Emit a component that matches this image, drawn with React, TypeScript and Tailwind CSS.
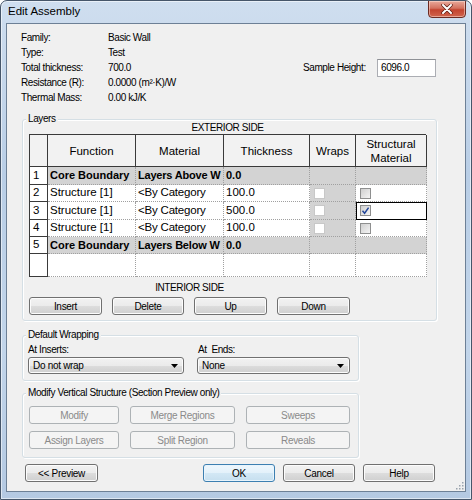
import React from "react";

const btn =
  "h-[18px] rounded-[3px] border border-[#707070] bg-[linear-gradient(#f2f2f2,#ebebeb_50%,#dddddd_50%,#cfcfcf)] shadow-[inset_0_0_0_1px_#fcfcfc] text-[10px] tracking-[-0.3px] text-black flex items-center justify-center";
const btnOff =
  "h-[18px] rounded-[3px] border border-[#adb2b5] bg-[#f4f4f4] text-[10px] tracking-[-0.3px] text-[#8a8a8a] flex items-center justify-center";
const btnDefault =
  "h-[18px] rounded-[3px] border border-[#3c7fb1] bg-[linear-gradient(#eef7fd,#e3f1fa_50%,#d3e8f5_50%,#c6dfef)] shadow-[inset_0_0_0_1px_#e8f4fc] text-[10px] tracking-[-0.3px] text-black flex items-center justify-center";

const cols = "grid grid-cols-[18px_88px_88px_86px_46px_71px]";
const head = "border-r border-b border-[#3a3a3a] bg-[#f2f2f2] flex items-center justify-center text-center leading-[14px]";
const num = "border-r border-b border-[#3a3a3a] bg-white flex items-center pl-[3px]";
const cell = "border-r border-b border-dotted border-[#a0a0a0] flex items-center overflow-hidden whitespace-nowrap";

type Row = {
  n: string;
  f?: string;
  m?: string;
  t?: string;
  bold?: boolean;
  h: string;
  checked?: boolean;
  sel?: boolean;
  boxes?: boolean;
};

const rows: Row[] = [
  { n: "1", f: "Core Boundary", m: "Layers Above W", t: "0.0", bold: true, h: "h-[18px]" },
  { n: "2", f: "Structure [1]", m: "<By Category", t: "100.0", h: "h-[17px]", boxes: true },
  { n: "3", f: "Structure [1]", m: "<By Category", t: "500.0", h: "h-[18px]", boxes: true, checked: true, sel: true },
  { n: "4", f: "Structure [1]", m: "<By Category", t: "100.0", h: "h-[17px]", boxes: true },
  { n: "5", f: "Core Boundary", m: "Layers Below W", t: "0.0", bold: true, h: "h-[17px]" },
  { n: "", h: "h-[23px]" },
];

function Group({ label, className, children }: { label: string; className: string; children?: React.ReactNode }) {
  return (
    <div className={`relative rounded-[3px] border border-[#d5dfe5] shadow-[inset_1px_1px_0_#ffffff,1px_1px_0_#ffffff] ${className}`}>
      <span className="absolute top-[-7px] left-[3px] bg-[#f0f0f0] px-[2px] leading-[12px] whitespace-nowrap">{label}</span>
      {children}
    </div>
  );
}

function Combo({ value, className }: { value: string; className: string }) {
  return (
    <div className={`${btn} !justify-between pl-[4px] pr-[5px] ${className}`}>
      <span>{value}</span>
      <svg width="7" height="4" viewBox="0 0 7 4">
        <polygon points="0,0 7,0 3.5,4" fill="#000" />
      </svg>
    </div>
  );
}

function Check({ kind, checked }: { kind: "off" | "on"; checked?: boolean }) {
  if (kind === "off") {
    return <div className="ml-[4px] w-[11px] h-[11px] border border-[#c8c8c8] bg-white" />;
  }
  return (
    <div className="ml-[4px] w-[11px] h-[11px] border border-[#8e8f8f] bg-[linear-gradient(135deg,#cfcfcf,#f4f4f4)] flex items-center justify-center">
      {checked && (
        <svg width="9" height="9" viewBox="0 0 9 9">
          <path d="M1.5 4.8 L3.6 7.2 L7.6 1.6" stroke="#24479a" strokeWidth="1.5" fill="none" />
        </svg>
      )}
    </div>
  );
}

export default function App() {
  return (
    <div className="w-[472px] h-[500px] font-['Liberation_Sans',Arial,sans-serif] text-black">
      <div className="relative w-[472px] h-[500px] rounded-t-[7px] border border-[#46566a] bg-[linear-gradient(180deg,#cfdeef,#b9cee6_35%,#c2d5ea_70%,#b4c9e2)] shadow-[inset_0_0_0_1px_rgba(255,255,255,0.55)] overflow-hidden">
        {/* TITLE */}
        <div className="h-[22px] flex items-center pl-[7px] text-[11.5px] text-black">Edit Assembly</div>
        <div className="absolute top-[-1px] right-[5px] w-[38px] h-[18px] rounded-b-[4px] border border-[#6b2a22] bg-[linear-gradient(#e9a99b,#d3715f_45%,#c3432f_55%,#d0644d)] shadow-[inset_0_0_0_1px_rgba(255,230,220,0.5)] flex items-center justify-center">
          <svg width="12" height="10" viewBox="0 0 12 10">
            <path d="M2 1 L10 9 M10 1 L2 9" stroke="#5a1a12" strokeWidth="3.4" strokeLinecap="round" />
            <path d="M2 1 L10 9 M10 1 L2 9" stroke="#ffffff" strokeWidth="2" strokeLinecap="round" />
          </svg>
        </div>

        {/* CLIENT */}
        <div className="relative mx-[5px] h-[469px] border border-[#6d8096] bg-[#f0f0f0] text-[10px] tracking-[-0.4px]">
          {/* INFO */}
          <div className="pt-[6px] pl-[14px] flex flex-col">
            <div className="h-[15px] flex items-center">
              <span className="w-[87px]">Family:</span>
              <span>Basic Wall</span>
            </div>
            <div className="h-[15px] flex items-center">
              <span className="w-[87px]">Type:</span>
              <span>Test</span>
            </div>
            <div className="h-[15px] flex items-center">
              <span className="w-[87px]">Total thickness:</span>
              <span className="w-[195px]">700.0</span>
              <span className="w-[74px]">Sample Height:</span>
              <div className="w-[59px] h-[18px] border border-[#abadb3] border-t-[#8e9196] bg-white flex items-center pl-[3px] shrink-0">6096.0</div>
            </div>
            <div className="h-[15px] flex items-center">
              <span className="w-[87px]">Resistance (R):</span>
              <span>0.0000 (m²·K)/W</span>
            </div>
            <div className="h-[15px] flex items-center">
              <span className="w-[87px]">Thermal Mass:</span>
              <span>0.00 kJ/K</span>
            </div>
          </div>

          {/* LAYERS */}
          <Group label="Layers" className="mt-[14px] ml-[15px] w-[415px] h-[202px]">
            <div className="pt-[2px] ml-[6px] w-[397px]">
              <div className="h-[12px] leading-[12px] text-center">EXTERIOR SIDE</div>
              <div className={`${cols} border-l border-t border-[#3a3a3a] text-[11.5px] tracking-normal`}>
                <div className={`${head} h-[32px]`} />
                <div className={`${head} h-[32px]`}>Function</div>
                <div className={`${head} h-[32px]`}>Material</div>
                <div className={`${head} h-[32px]`}>Thickness</div>
                <div className={`${head} h-[32px]`}>Wraps</div>
                <div className={`${head} h-[32px]`}>
                  Structural
                  <br />
                  Material
                </div>
                {rows.map((r, i) => {
                  const gray = r.bold ? "bg-[#d3d3d3]" : "bg-white";
                  const txt = r.bold ? "font-bold text-[11px]" : "";
                  return (
                    <React.Fragment key={i}>
                      <div className={`${num} ${r.h}`}>{r.n}</div>
                      <div className={`${cell} ${r.h} ${gray} ${txt} pl-[2px]`}>{r.f}</div>
                      <div className={`${cell} ${r.h} ${gray} ${txt} pl-[2px] tracking-[-0.2px]`}>{r.m}</div>
                      <div className={`${cell} ${r.h} ${gray} ${txt} pl-[2px]`}>{r.t}</div>
                      <div className={`${cell} ${r.h} ${r.boxes || r.bold ? "bg-[#d3d3d3]" : "bg-white"}`}>
                        {r.boxes && <Check kind="off" />}
                      </div>
                      <div
                        className={`${cell} ${r.h} ${gray} ${r.sel ? "outline outline-[1.5px] outline-black -outline-offset-1" : ""}`}
                      >
                        {r.boxes && <Check kind="on" checked={r.checked} />}
                      </div>
                    </React.Fragment>
                  );
                })}
              </div>
              <div className="w-[321px]">
                <div className="mt-[5px] h-[12px] leading-[12px] text-center">INTERIOR SIDE</div>
                <div className="mt-[3px] flex gap-[10px]">
                  <div className={`${btn} w-[73px]`}>Insert</div>
                  <div className={`${btn} w-[72px]`}>Delete</div>
                  <div className={`${btn} w-[73px]`}>Up</div>
                  <div className={`${btn} w-[73px]`}>Down</div>
                </div>
              </div>
            </div>
          </Group>

          {/* DEFAULT WRAPPING */}
          <Group label="Default Wrapping" className="mt-[14px] ml-[15px] w-[337px] h-[46px]">
            <div className="pt-[8px] pl-[5px] flex gap-[13px]">
              <div className="w-[156px]">
                <div className="h-[12px] leading-[12px]">At Inserts:</div>
                <Combo value="Do not wrap" className="mt-[1px] !h-[17px] w-[156px]" />
              </div>
              <div className="w-[153px]">
                <div className="h-[12px] leading-[12px] pl-[1px]">At&nbsp; Ends:</div>
                <Combo value="None" className="mt-[1px] !h-[17px] w-[153px]" />
              </div>
            </div>
          </Group>

          {/* MODIFY VERTICAL STRUCTURE */}
          <Group label="Modify Vertical Structure (Section Preview only)" className="mt-[12px] ml-[15px] w-[337px] h-[65px]">
            <div className="pt-[12px] pl-[6px] flex flex-col gap-[7px]">
              <div className="flex gap-[11px]">
                <div className={`${btnOff} w-[90px]`}>Modify</div>
                <div className={`${btnOff} w-[105px]`}>Merge Regions</div>
                <div className={`${btnOff} w-[104px]`}>Sweeps</div>
              </div>
              <div className="flex gap-[11px]">
                <div className={`${btnOff} w-[90px]`}>Assign Layers</div>
                <div className={`${btnOff} w-[105px]`}>Split Region</div>
                <div className={`${btnOff} w-[104px]`}>Reveals</div>
              </div>
            </div>
          </Group>

          {/* BOTTOM BUTTONS */}
          <div className="mt-[6px] flex">
            <div className={`${btn} ml-[18px] w-[73px]`}>&lt;&lt; Preview</div>
            <div className="ml-[105px] flex gap-[8px]">
              <div className={`${btnDefault} w-[72px]`}>OK</div>
              <div className={`${btn} w-[72px]`}>Cancel</div>
              <div className={`${btn} w-[72px]`}>Help</div>
            </div>
          </div>

          {/* RESIZE GRIP */}
          <svg className="absolute right-[1px] bottom-[1px]" width="10" height="10" viewBox="0 0 10 10">
            {[
              [8, 2],
              [8, 5],
              [5, 5],
              [8, 8],
              [5, 8],
              [2, 8],
            ].map(([x, y], i) => (
              <rect key={i} x={x} y={y} width="1.5" height="1.5" fill="#9aa3ad" />
            ))}
          </svg>
        </div>
      </div>
    </div>
  );
}
